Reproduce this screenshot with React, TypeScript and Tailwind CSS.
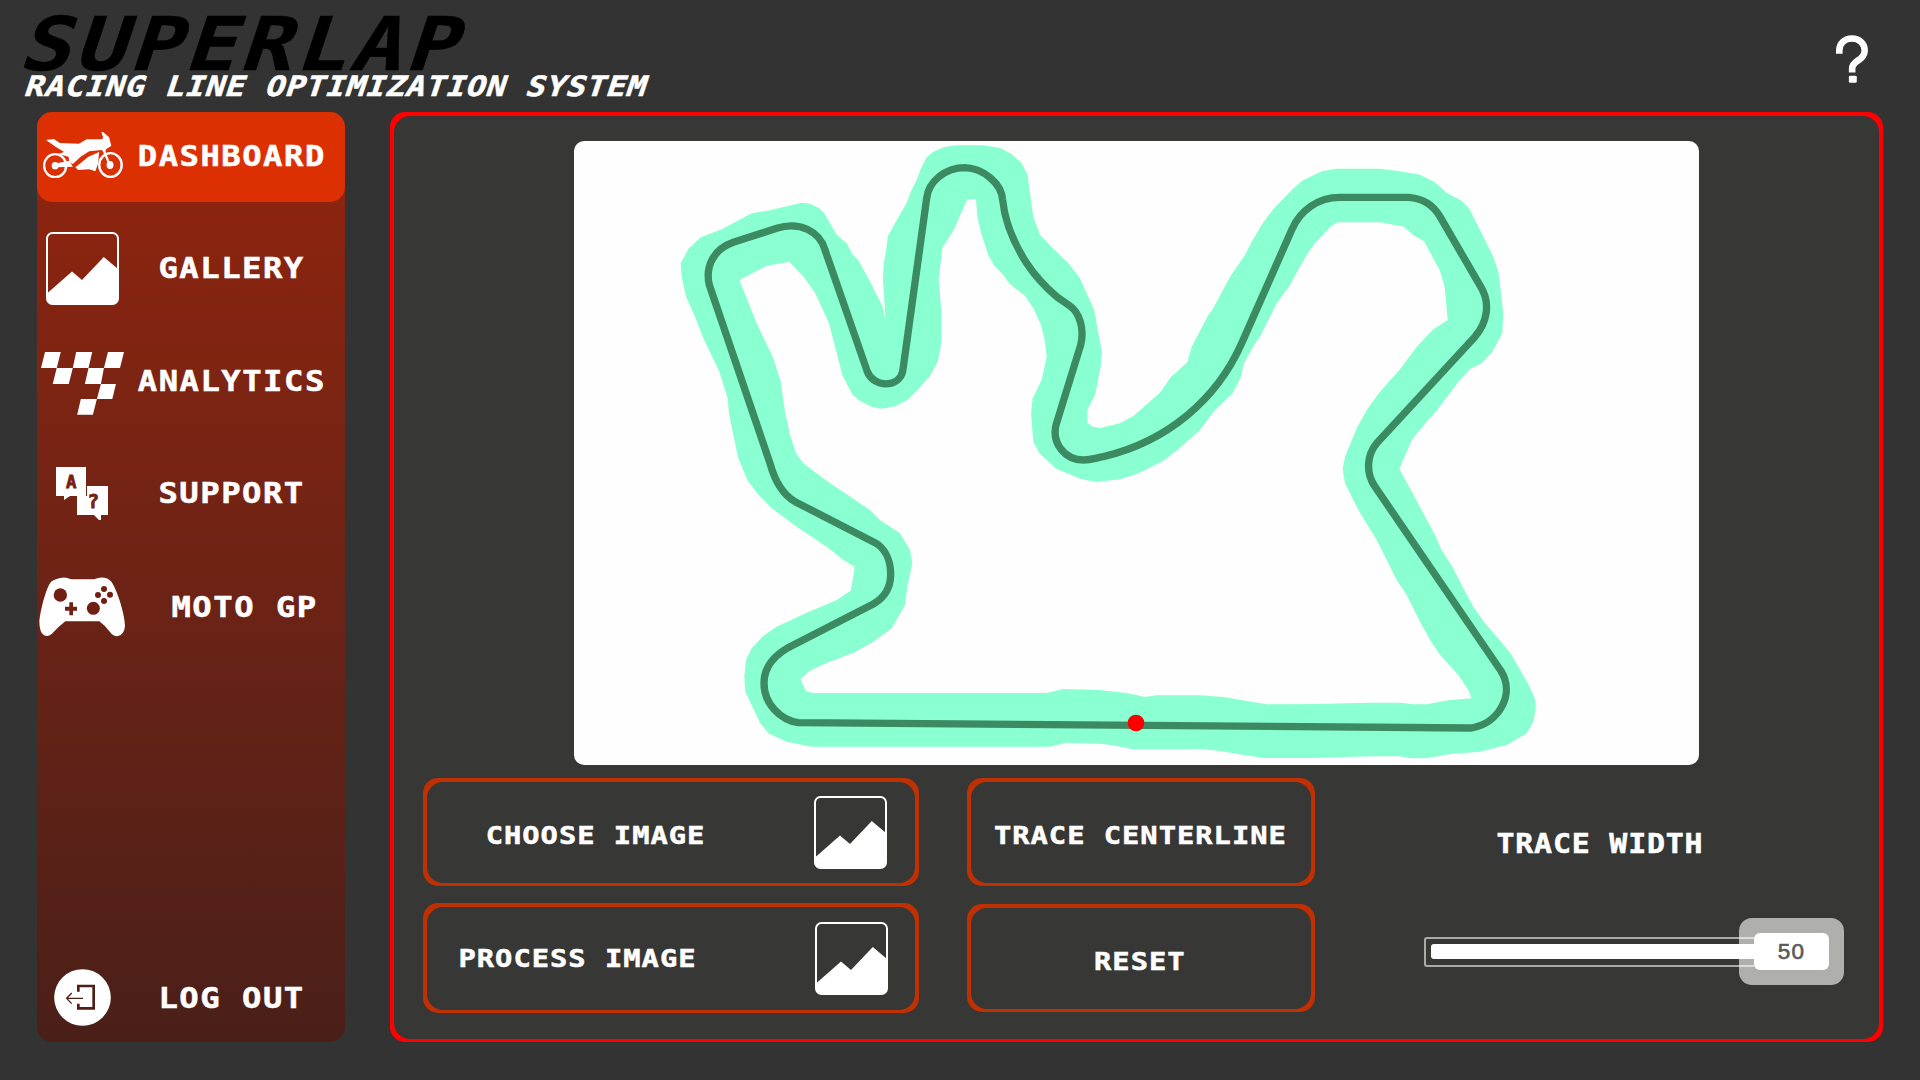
import React from "react";

const OUTER =
  "2042,790 2065,747 2102,712 2165,688 2255,640 2310,631 2380,614 2405,608 2432,612 2458,625 2473,640 2510,704 2540,730 2557,762 2577,783 2617,858 2648,920 2657,963 2653,900 2649,840 2651,790 2657,760 2664,708 2695,652 2720,608 2732,575 2750,540 2763,505 2780,472 2800,455 2830,442 2865,436 2950,436 3000,444 3035,462 3065,490 3083,525 3090,580 3100,650 3120,704 3155,742 3205,790 3240,835 3260,880 3283,930 3295,1000 3306,1055 3302,1100 3285,1185 3262,1230 3262,1268 3278,1280 3300,1284 3360,1270 3400,1248 3430,1222 3480,1178 3512,1132 3562,1087 3575,1040 3625,945 3640,925 3690,830 3735,765 3755,725 3788,670 3820,627 3870,575 3905,543 3965,514 4010,506 4140,506 4200,514 4260,524 4305,547 4340,578 4385,602 4408,626 4445,700 4480,770 4495,815 4503,880 4510,940 4507,1000 4475,1058 4445,1090 4410,1107 4375,1145 4310,1232 4280,1265 4235,1320 4198,1406 4230,1465 4265,1530 4310,1615 4322,1645 4358,1702 4390,1765 4420,1820 4455,1870 4505,1927 4535,1965 4585,2052 4605,2097 4607,2125 4600,2165 4580,2200 4520,2235 4440,2255 4350,2262 4280,2275 4230,2274 4200,2269 4110,2269 3940,2274 3790,2274 3660,2253 3600,2247 3470,2248 3400,2248 3350,2238 3310,2232 3200,2228 3150,2240 2435,2240 2360,2225 2305,2200 2280,2168 2250,2105 2236,2075 2233,2030 2238,1980 2255,1945 2290,1907 2330,1880 2425,1836 2475,1815 2510,1800 2552,1772 2558,1740 2564,1700 2530,1680 2480,1640 2390,1580 2315,1525 2270,1478 2242,1440 2215,1375 2202,1315 2187,1240 2183,1195 2158,1115 2110,1015 2085,950 2058,890 2045,830";

const INNER =
  "2218,840 2302,797 2368,785 2412,832 2445,878 2487,970 2505,1040 2528,1128 2558,1185 2580,1203 2618,1222 2645,1226 2685,1219 2722,1200 2755,1167 2790,1128 2813,1085 2825,1025 2825,940 2816,840 2827,745 2862,688 2902,598 2928,598 2932,650 2945,705 2965,765 2983,797 3005,820 3030,852 3075,888 3100,925 3123,975 3135,1025 3140,1070 3125,1140 3098,1195 3093,1240 3100,1325 3118,1360 3170,1407 3245,1438 3290,1446 3360,1438 3410,1422 3490,1383 3535,1348 3598,1292 3645,1230 3698,1180 3722,1132 3732,1090 3765,1030 3780,1010 3830,910 3870,855 3885,827 3920,765 3945,730 3990,682 4012,667 4140,667 4212,680 4240,706 4272,724 4320,812 4334,860 4343,960 4300,988 4250,1040 4200,1108 4140,1175 4100,1230 4070,1285 4035,1370 4028,1408 4035,1450 4075,1530 4130,1620 4160,1680 4190,1740 4220,1785 4260,1865 4290,1920 4320,1965 4375,2025 4405,2070 4415,2095 4350,2100 4280,2113 4240,2113 4200,2108 4110,2108 3950,2112 3800,2113 3670,2091 3600,2086 3470,2086 3435,2091 3385,2080 3300,2070 3190,2067 3140,2079 2440,2079 2418,2074 2401,2037 2430,2012 2480,1989 2565,1956 2620,1925 2675,1885 2715,1815 2722,1760 2737,1690 2730,1650 2700,1600 2640,1560 2610,1530 2480,1442 2410,1390 2388,1360 2370,1305 2355,1235 2342,1145 2320,1075 2270,970";

const CENTERLINE =
  "M4415 2184 L2395 2168 C2340 2160 2292 2110 2292 2050 C2292 2005 2318 1965 2380 1935 L2620 1812 C2650 1795 2672 1765 2672 1723 C2672 1680 2655 1645 2625 1628 L2385 1505 C2350 1485 2325 1445 2310 1390 L2128 855 C2115 800 2140 748 2200 727 L2330 685 C2400 663 2460 695 2475 750 L2602 1115 C2620 1162 2695 1165 2708 1115 L2780 595 C2785 545 2835 503 2895 503 C2950 505 3005 550 3008 600 C3015 670 3045 735 3080 790 C3108 832 3140 865 3170 890 L3210 918 C3238 938 3254 985 3242 1035 L3168 1275 C3155 1330 3195 1380 3250 1380 C3275 1380 3290 1373 3310 1370 C3500 1325 3650 1200 3725 1030 L3875 690 C3900 630 3955 592 4020 592 L4225 592 C4270 595 4300 615 4320 650 L4445 865 C4470 910 4463 965 4425 1010 L4130 1330 C4100 1365 4097 1420 4125 1460 L4503 2013 C4545 2080 4500 2168 4415 2184 Z";

function TrackMap() {
  return (
    <svg className="block h-full w-full" viewBox="1722 423 3375 1872" preserveAspectRatio="none">
      <polygon points={OUTER} fill="#8affd2" />
      <polygon points={INNER} fill="#fefefe" />
      <path d={CENTERLINE} fill="none" stroke="#3c8a62" strokeWidth="22" strokeLinejoin="round" />
      <circle cx="3408" cy="2169" r="25" fill="#ff0000" />
    </svg>
  );
}

function ImageIcon() {
  return (
    <svg className="block h-[73px] w-[73px]" viewBox="0 0 73 73">
      <rect x="1" y="1" width="71" height="71" rx="5.5" fill="none" stroke="#fff" strokeWidth="2" />
      <path d="M1 61.5 L26 39.5 L36 48 L57.8 25 L72 37 V67 Q72 72 67 72 H6 Q1 72 1 67 Z" fill="#fff" />
    </svg>
  );
}

function BikeIcon() {
  return (
    <svg className="block h-[46px] w-[80px]" viewBox="99 396 185 138" preserveAspectRatio="none">
      <g fill="none" stroke="#fff" strokeWidth="2.4">
        <ellipse cx="127" cy="497" rx="25.5" ry="34.5" vectorEffect="non-scaling-stroke" />
        <ellipse cx="255" cy="495" rx="26" ry="35.5" vectorEffect="non-scaling-stroke" />
        <path d="M236 440 L254 497 M129 496 L160 490" vectorEffect="non-scaling-stroke" />
      </g>
      <g fill="#fff">
        <ellipse cx="127" cy="497" rx="8" ry="11" />
        <ellipse cx="254" cy="495" rx="8" ry="12" />
        <path d="M106 420 L124 417 L138 429 L182 431 L200 418 L236 418 L238 412 L234 397 L238 396 L252 412 L257 438 L246 446 L242 456 L234 450 L206 454 L186 470 L168 492 L160 486 L158 470 L134 462 L148 456 L128 440 Z" />
        <path d="M130 490 L160 482 L168 500 L130 502 Z" />
        <path d="M229 456 L204 470 L174 502 L180 510 L206 508 L220 514 L226 492 Z" />
      </g>
    </svg>
  );
}

function FlagIcon() {
  return (
    <svg className="block h-[63px] w-[83px]" viewBox="34 426 248 189" preserveAspectRatio="none">
      <path
        fill="#fff"
        d="M46 426H93L81 474H34ZM139 426H187L176 474H129ZM234 426H282L270 474H222ZM81 474H129L117 522H69ZM176 474H222L213 522H165ZM213 522H258L247 567H201ZM153 567H201L189 614H142Z"
      />
    </svg>
  );
}

function SupportIcon() {
  return (
    <svg className="block h-[53px] w-[52px]" viewBox="78 111 156 159">
      <path d="M78 111H168V198H120L102 210V198H78Z" fill="#fff" />
      <path d="M141 198H171V168H234V255H213V270H207L192 255H141Z" fill="#fff" />
      <g
        fill="#7a2010"
        stroke="#7a2010"
        strokeWidth="2.5"
        fontFamily="DejaVu Sans Mono"
        fontWeight="700"
        textAnchor="middle"
      >
        <text x="124" y="174" fontSize="52">A</text>
        <text x="190" y="234" fontSize="58">?</text>
      </g>
    </svg>
  );
}

function PadIcon() {
  return (
    <svg className="block h-[60px] w-[86px]" viewBox="27 443 258 180">
      <path
        fill="#fff"
        d="M72 452Q100 438 123 450H192Q225 436 245 458C265 490 285 560 285 590Q283 617 262 621Q250 621 240 608Q225 588 208 576H106Q85 592 65 614Q55 623 42 618Q28 610 28 575C32 540 45 490 58 465Q63 455 72 452Z"
      />
      <g fill="#711f12">
        <circle cx="91" cy="497" r="20" />
        <circle cx="190" cy="537" r="19.5" />
        <circle cx="222" cy="479" r="9" />
        <circle cx="204" cy="497" r="9" />
        <circle cx="240" cy="496" r="9" />
        <circle cx="222" cy="515" r="9" />
        <path d="M118 519H129V532H141V544H129V558H118V544H105V532H118Z" />
      </g>
    </svg>
  );
}

function LogoutIcon() {
  return (
    <svg className="block h-[57px] w-[57px]" viewBox="72 85 171 171">
      <circle cx="157.5" cy="170.5" r="85" fill="#fff" />
      <g fill="none" stroke="#4f1f17">
        <path d="M145 153V136H191V203H145V189" strokeWidth="8" />
        <path d="M159 173H111M125 157L110 173L125 189" strokeWidth="4" />
      </g>
    </svg>
  );
}

const MONO =
  "inline-block whitespace-pre font-['DejaVu_Sans_Mono',monospace] font-bold leading-none text-white [-webkit-text-stroke:0.5px_currentColor]";

function NavItem({
  icon,
  label,
  active = false,
  iconClass = "",
  labelClass = "",
}: {
  icon: React.ReactNode;
  label: string;
  active?: boolean;
  iconClass?: string;
  labelClass?: string;
}) {
  return (
    <button className={`flex h-[90px] w-full items-center rounded-[15px] ${active ? "bg-[#dc2f02]" : ""}`}>
      <span className={`flex w-[90px] shrink-0 justify-center ${iconClass}`}>{icon}</span>
      <span className={`flex w-[210px] shrink-0 justify-center ${labelClass}`}>
        <span className={`${MONO} scale-x-[1.15] text-[28px] tracking-[1.31px]`}>{label}</span>
      </span>
    </button>
  );
}

function OutlineButton({
  className,
  innerClass,
  children,
}: {
  className: string;
  innerClass: string;
  children: React.ReactNode;
}) {
  return (
    <button className={`flex rounded-[15px] bg-[#bf3003] px-[4px] pt-[4px] pb-[3px] ${className}`}>
      <span className={`flex h-full w-full items-center rounded-[16px] bg-[#373735] ${innerClass}`}>{children}</span>
    </button>
  );
}

const BTN_TEXT = `${MONO} scale-x-[1.15] text-[25px] tracking-[0.87px]`;

export default function App() {
  return (
    <div className="flex h-[1080px] w-[1920px] flex-col overflow-hidden bg-[#333333]">
      <header className="flex h-[112px] shrink-0 items-start justify-between">
        <div className="flex flex-col items-start pt-[7px] pl-[26px]">
          <h1
            className={`${MONO} origin-left scale-x-[1.15] -skew-x-[16deg] text-[74px] tracking-[3.4px] !text-black`}
          >
            SUPERLAP
          </h1>
          <p
            className={`${MONO} -mt-[8px] origin-left scale-x-[1.15] -skew-x-[16deg] text-[28px] tracking-[0.58px]`}
          >
            RACING LINE OPTIMIZATION SYSTEM
          </p>
        </div>
        <button aria-label="Help" className="mt-[35px] mr-[52px]">
          <svg className="block h-[48px] w-[32px]" viewBox="168 75 97 144">
            <path
              d="M178 131V121C178 100 194 85 216 85C238 85 255 100 255 121C255 136 245 145 234 152C222 160 217 165 217 176V188"
              fill="none"
              stroke="#fff"
              strokeWidth="20"
            />
            <rect x="207" y="198" width="24" height="21" rx="4" fill="#fff" />
          </svg>
        </button>
      </header>

      <main className="flex h-[930px]">
        <nav className="ml-[37px] flex w-[308px] shrink-0 flex-col gap-[22.5px] rounded-[15px] bg-linear-to-b from-[#93240b] to-[#4a1f18]">
          <NavItem icon={<BikeIcon />} label="DASHBOARD" active iconClass="pb-[4px] pl-[2px]" labelClass="pb-[1px]" />
          <NavItem icon={<ImageIcon />} label="GALLERY" iconClass="pb-[2px]" labelClass="pb-[2px]" />
          <NavItem icon={<FlagIcon />} label="ANALYTICS" iconClass="pt-[2px]" labelClass="pb-[1px]" />
          <NavItem icon={<SupportIcon />} label="SUPPORT" iconClass="pb-[3px]" labelClass="pb-[2px]" />
          <NavItem icon={<PadIcon />} label="MOTO GP" labelClass="pl-[26px] pt-[2px]" />
          <div className="mt-auto">
            <NavItem icon={<LogoutIcon />} label="LOG OUT" labelClass="pt-[3px]" />
          </div>
        </nav>

        <section className="ml-[45px] flex w-[1493px] shrink-0 rounded-[15px] bg-[#ff0000] px-[4px] pt-[4px] pb-[3px]">
          <div className="flex w-full flex-col rounded-[16px] bg-[#373735] pt-[25px]">
            <div className="ml-[180px] h-[624px] w-[1125px] shrink-0 overflow-hidden rounded-[10px] bg-[#fefefe]">
              <TrackMap />
            </div>

            <div className="mt-[13px] ml-[29px] flex">
              <div className="flex w-[496px] flex-col gap-[17px]">
                <OutlineButton className="h-[108px]" innerClass="justify-between">
                  <span className="flex w-[338px] justify-center pt-[6px]">
                    <span className={BTN_TEXT}>CHOOSE IMAGE</span>
                  </span>
                  <span className="mr-[28px]">
                    <ImageIcon />
                  </span>
                </OutlineButton>
                <OutlineButton className="h-[110px]" innerClass="justify-between">
                  <span className="flex w-[301px] justify-center">
                    <span className={BTN_TEXT}>PROCESS IMAGE</span>
                  </span>
                  <span className="mr-[27px]">
                    <ImageIcon />
                  </span>
                </OutlineButton>
              </div>

              <div className="ml-[48px] flex w-[348px] flex-col gap-[18px]">
                <OutlineButton className="h-[108px]" innerClass="justify-center pt-[6px] pr-[2px]">
                  <span className={BTN_TEXT}>TRACE CENTERLINE</span>
                </OutlineButton>
                <OutlineButton className="h-[108px]" innerClass="justify-center pt-[5px] pr-[2px]">
                  <span className={BTN_TEXT}>RESET</span>
                </OutlineButton>
              </div>

              <div className="ml-[109px] flex w-[420px] flex-col">
                <div className="mt-[53px] flex w-[352px] justify-center">
                  <span className={`${MONO} scale-x-[1.15] text-[26px] tracking-[0.7px]`}>TRACE WIDTH</span>
                </div>
                <div className="mt-[61px] flex h-[67px] items-center">
                  <div className="flex h-[30px] w-[330px] shrink-0 items-center rounded-l-[3px] border-y-2 border-l-2 border-[#aaaaa9] pl-[5px]">
                    <div className="h-[15px] w-full rounded-l-[3px] bg-white" />
                  </div>
                  <div className="z-10 -ml-[15px] flex h-[67px] w-[105px] shrink-0 items-center justify-center rounded-[13px] bg-white/60">
                    <div className="flex h-[37px] w-[75px] items-center justify-center rounded-[6px] bg-white font-['Liberation_Sans',sans-serif] text-[22.5px] tracking-[1.2px] text-[#585858] [-webkit-text-stroke:0.6px_#585858]">
                      50
                    </div>
                  </div>
                </div>
              </div>
            </div>
          </div>
        </section>
      </main>
    </div>
  );
}
